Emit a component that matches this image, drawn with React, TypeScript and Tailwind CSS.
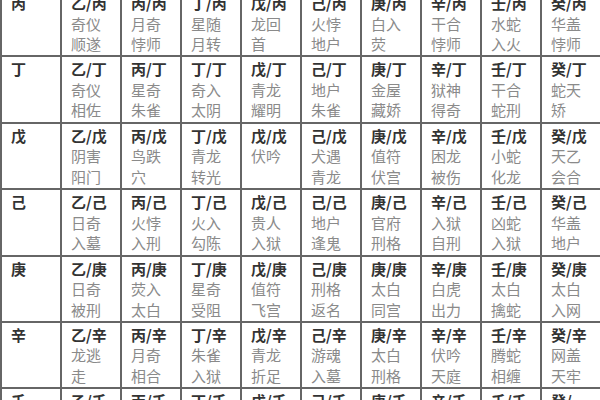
const stems = ['乙', '丙', '丁', '戊', '己', '庚', '辛', '壬', '癸'];

type Row = { stem: string; cells: string[][] };

const rows: Row[] = [
  {
    stem: '丙',
    cells: [
      ['奇仪', '顺遂'],
      ['月奇', '悖师'],
      ['星随', '月转'],
      ['龙回', '首'],
      ['火悖', '地户'],
      ['白入', '荧'],
      ['干合', '悖师'],
      ['水蛇', '入火'],
      ['华盖', '悖师'],
    ],
  },
  {
    stem: '丁',
    cells: [
      ['奇仪', '相佐'],
      ['星奇', '朱雀'],
      ['奇入', '太阴'],
      ['青龙', '耀明'],
      ['地户', '朱雀'],
      ['金屋', '藏娇'],
      ['狱神', '得奇'],
      ['干合', '蛇刑'],
      ['蛇天', '矫'],
    ],
  },
  {
    stem: '戊',
    cells: [
      ['阴害', '阳门'],
      ['鸟跌', '穴'],
      ['青龙', '转光'],
      ['伏吟'],
      ['犬遇', '青龙'],
      ['值符', '伏宫'],
      ['困龙', '被伤'],
      ['小蛇', '化龙'],
      ['天乙', '会合'],
    ],
  },
  {
    stem: '己',
    cells: [
      ['日奇', '入墓'],
      ['火悖', '入刑'],
      ['火入', '勾陈'],
      ['贵人', '入狱'],
      ['地户', '逢鬼'],
      ['官府', '刑格'],
      ['入狱', '自刑'],
      ['凶蛇', '入狱'],
      ['华盖', '地户'],
    ],
  },
  {
    stem: '庚',
    cells: [
      ['日奇', '被刑'],
      ['荧入', '太白'],
      ['星奇', '受阻'],
      ['值符', '飞宫'],
      ['刑格', '返名'],
      ['太白', '同宫'],
      ['白虎', '出力'],
      ['太白', '擒蛇'],
      ['太白', '入网'],
    ],
  },
  {
    stem: '辛',
    cells: [
      ['龙逃', '走'],
      ['月奇', '相合'],
      ['朱雀', '入狱'],
      ['青龙', '折足'],
      ['游魂', '入墓'],
      ['太白', '刑格'],
      ['伏吟', '天庭'],
      ['腾蛇', '相缠'],
      ['网盖', '天牢'],
    ],
  },
  { stem: '壬', cells: stems.map(() => []) },
];

export default function App() {
  return (
    <div
      className="h-[400px] w-[600px] overflow-hidden bg-white"
      style={{ fontFamily: '"Noto Sans CJK SC", "Noto Sans", sans-serif' }}
    >
      <table className="-mt-[11px] w-[599px] table-fixed border-collapse">
        <colgroup>
          <col className="w-[60px]" />
          {stems.map((s) => (
            <col key={s} className="w-[60px]" />
          ))}
        </colgroup>
        <tbody>
          {rows.map((row) => (
            <tr key={row.stem} className="h-[66.4px]">
              <td className="border-2 border-[#666] pl-[9px] pt-[2px] align-top">
                <div className="text-[15px] font-bold leading-[20.5px] text-[#333]">{row.stem}</div>
              </td>
              {row.cells.map((lines, i) => (
                <td key={i} className="border-2 border-[#666] pl-[9px] pt-[2px] align-top">
                  <div className="whitespace-nowrap text-[15px] font-bold leading-[20.5px] text-[#333]">
                    {row.stem === '壬' && i === 8 ? '癸/' : `${stems[i]}/${row.stem}`}
                  </div>
                  {lines.map((l) => (
                    <div key={l} className="text-[15px] leading-[20.5px] text-[#8a8a8a]">
                      {l}
                    </div>
                  ))}
                </td>
              ))}
            </tr>
          ))}
        </tbody>
      </table>
    </div>
  );
}
